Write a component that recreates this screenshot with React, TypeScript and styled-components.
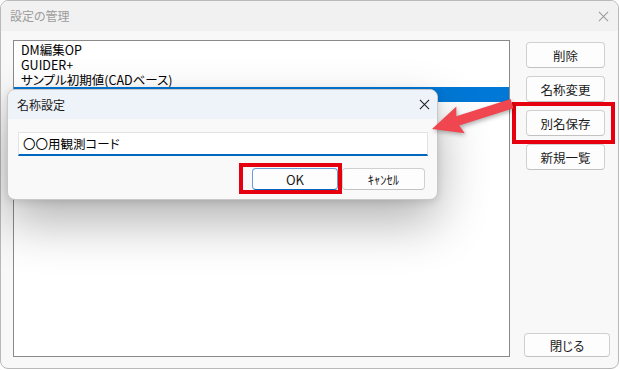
import React from "react";
import styled, { createGlobalStyle, css } from "styled-components";

const GlobalStyle = createGlobalStyle`
  html, body {
    margin: 0;
    padding: 0;
    background: #ffffff;
  }
  body {
    font-family: "Noto Sans CJK JP", "Noto Sans", sans-serif;
    font-feature-settings: "palt";
    color: #000;
  }
`;

// the 4th row is selected and sits under the dialog
const settings = ["DM編集OP", "GUIDER+", "サンプル初期値(CADベース)", ""];
const sideButtons = ["削除", "名称変更", "別名保存", "新規一覧"];

const CloseIcon: React.FC<{ color: string }> = ({ color }) => (
  <svg width="12" height="12" viewBox="0 0 12 12">
    <path d="M1 1 L11 11 M11 1 L1 11" stroke={color} strokeWidth="1.1" fill="none" />
  </svg>
);

const App: React.FC = () => {
  return (
    <>
      <GlobalStyle />
      <Stage>
        <Window>
          <TitleBar>
            <Title $inactive>設定の管理</Title>
            <CloseIcon color="#9a9a9a" />
          </TitleBar>
          <Body>
            <List>
              {settings.map((name, i) => (
                <Item key={i} $selected={i === 3}>
                  {name}
                </Item>
              ))}
            </List>
            <Side>
              {sideButtons.map((label) => (
                <SideButton key={label}>{label}</SideButton>
              ))}
              <SideButton $close>閉じる</SideButton>
            </Side>
          </Body>
        </Window>

        <Dialog>
          <DialogTitleBar>
            <Title>名称設定</Title>
            <CloseIcon color="#1a1a1a" />
          </DialogTitleBar>
          <DialogBody>
            <NameInput defaultValue="〇〇用観測コード" />
            <DialogActions>
              <DialogButton $primary>OK</DialogButton>
              <DialogButton>ｷｬﾝｾﾙ</DialogButton>
            </DialogActions>
          </DialogBody>
        </Dialog>

        <Highlight $x={512} $y={102} $w={103} $h={42} />
        <Highlight $x={239} $y={163} $w={103} $h={31} />

        <ArrowLayer width="620" height="370" viewBox="0 0 620 370">
          <g transform="translate(432,129) rotate(-17.6)">
            <polygon
              points="0,0 30,-14 27,-4.8 84,-4.8 84,4.8 27,4.8 30,14"
              fill="#ef4650"
            />
          </g>
        </ArrowLayer>
      </Stage>
    </>
  );
};

export default App;

const Stage = styled.div`
  position: relative;
  width: 620px;
  height: 370px;
  overflow: hidden;
  background: #ffffff;
`;

const Window = styled.div`
  width: 619px;
  height: 369px;
  box-sizing: border-box;
  border: 1px solid #b9b9b9;
  border-radius: 8px;
  background: #f8f8f8;
  overflow: hidden;
  display: flex;
  flex-direction: column;
`;

const TitleBar = styled.div`
  height: 30px;
  flex: none;
  display: flex;
  align-items: center;
  justify-content: space-between;
  padding: 0 9px 0 9px;
  background: #f1f1f1;
  svg {
    width: 11px;
    height: 11px;
  }
`;

const Title = styled.span<{ $inactive?: boolean }>`
  font-size: 12px;
  line-height: 1;
  color: ${({ $inactive }) => ($inactive ? "#9c9c9c" : "#1a1a1a")};
`;

const Body = styled.div`
  flex: 1;
  display: flex;
  gap: 14px;
  padding: 9px 7px 11px 12px;
`;

const List = styled.div`
  width: 497px;
  height: 317px;
  box-sizing: border-box;
  border: 1px solid #8a8a8a;
  background: #ffffff;
  padding-top: 1px;
  display: flex;
  flex-direction: column;
`;

const Item = styled.div<{ $selected?: boolean }>`
  height: 15px;
  line-height: 15px;
  font-size: 12.5px;
  padding-left: 7px;
  white-space: nowrap;
  ${({ $selected }) =>
    $selected &&
    css`
      background: #0078d7;
      color: #ffffff;
    `}
`;

const Side = styled.div`
  width: 86px;
  display: flex;
  flex-direction: column;
  align-items: flex-start;
  gap: 8px;
  padding-top: 2px;
`;

const buttonBase = css`
  box-sizing: border-box;
  border: 1px solid #d0d0d0;
  border-bottom-color: #c2c2c2;
  border-radius: 4px;
  background: #fdfdfd;
  font-family: inherit;
  font-feature-settings: "palt";
  font-size: 12.5px;
  color: #1a1a1a;
  padding: 0;
  display: flex;
  align-items: center;
  justify-content: center;
`;

const SideButton = styled.div<{ $close?: boolean }>`
  ${buttonBase}
  width: 79px;
  height: 26px;
  margin-left: 2px;
  ${({ $close }) =>
    $close &&
    css`
      width: 86px;
      height: 24px;
      margin-left: 0;
      margin-top: auto;
    `}
`;

const Dialog = styled.div`
  position: absolute;
  left: 7px;
  top: 89px;
  width: 431px;
  height: 111px;
  box-sizing: border-box;
  border: 1px solid #c8c8c8;
  border-radius: 8px;
  background: #f9f9f9;
  overflow: hidden;
  box-shadow: 0 22px 50px rgba(0, 0, 0, 0.3), 0 2px 8px rgba(0, 0, 0, 0.12);
  display: flex;
  flex-direction: column;
`;

const DialogTitleBar = styled.div`
  height: 29px;
  flex: none;
  display: flex;
  align-items: center;
  justify-content: space-between;
  padding: 0 7px 0 9px;
  background: #eef2f9;
  svg {
    width: 11px;
    height: 11px;
  }
`;

const DialogBody = styled.div`
  flex: 1;
  display: flex;
  flex-direction: column;
  padding: 13px 9px 0 10px;
`;

const NameInput = styled.input`
  box-sizing: border-box;
  width: 410px;
  height: 24px;
  border: 1px solid #e3e3e3;
  border-bottom: 2px solid #0067c0;
  background: #ffffff;
  font-family: inherit;
  font-feature-settings: "palt";
  font-size: 12.5px;
  padding: 0 4px;
  color: #000;
  outline: none;
`;

const DialogActions = styled.div`
  display: flex;
  justify-content: flex-end;
  gap: 4px;
  margin-top: 12px;
  padding-right: 3px;
`;

const DialogButton = styled.div<{ $primary?: boolean }>`
  ${buttonBase}
  width: 83px;
  height: 22px;
  ${({ $primary }) =>
    $primary &&
    css`
      width: 86px;
      border-color: #6b9bd6;
      border-bottom-color: #0067c0;
      font-size: 13px;
    `}
`;

const Highlight = styled.div<{ $x: number; $y: number; $w: number; $h: number }>`
  position: absolute;
  left: ${({ $x }) => $x}px;
  top: ${({ $y }) => $y}px;
  width: ${({ $w }) => $w}px;
  height: ${({ $h }) => $h}px;
  box-sizing: border-box;
  border: 4px solid #e6000f;
`;

const ArrowLayer = styled.svg`
  position: absolute;
  left: 0;
  top: 0;
  pointer-events: none;
  filter: drop-shadow(1px 2px 2px rgba(0, 0, 0, 0.3));
`;
